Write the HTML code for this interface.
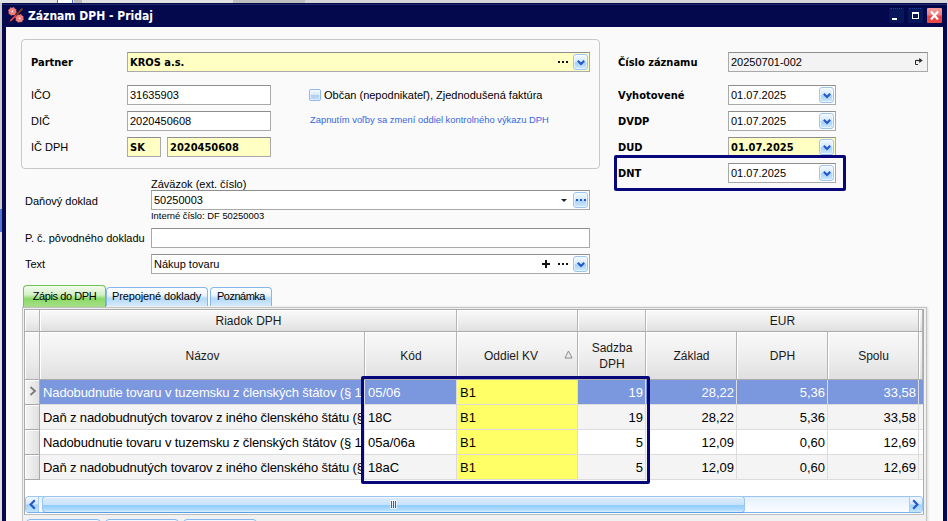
<!DOCTYPE html>
<html lang="sk">
<head>
<meta charset="utf-8">
<title>Záznam DPH - Pridaj</title>
<style>
html,body{margin:0;padding:0;}
body{width:948px;height:521px;overflow:hidden;position:relative;background:#d3d3d6;
  font-family:"Liberation Sans","DejaVu Sans",sans-serif;font-size:11px;color:#000;}
.abs,.abs *{position:absolute;box-sizing:border-box;}
.abs{left:0;top:0;width:948px;height:521px;}
.t{white-space:nowrap;line-height:14px;height:14px;}
.b{font-family:"DejaVu Sans Condensed","DejaVu Sans","Liberation Sans",sans-serif;font-weight:bold;font-stretch:condensed;}
.in{background:#fff;border:1px solid #a9a9a9;border-top-color:#8e8e8e;}
.y{background:#ffffc4;}
.dd{width:15px;height:16px;border:1px solid #9cc6ee;border-radius:3px;background:linear-gradient(#f3f9ff,#d4e9fb 45%,#a6d2f8 55%,#cfe7fc);box-shadow:inset 0 0 0 1px rgba(255,255,255,.55);}
.dd svg{left:3px;top:5px;}
.dot{width:2px;height:2px;background:#111;}
.g{font-size:13px;line-height:16px;height:16px;white-space:nowrap;}
.gh{font-size:12px;line-height:15px;height:15px;white-space:nowrap;text-align:center;color:#1a1a1a;}
.hc{background:linear-gradient(#f9f9f9,#ececec 60%,#dfdfdf);border-right:1px solid #b4b4b4;border-bottom:1px solid #ababab;box-shadow:inset 1px 1px 0 #fff;}
.cell{border-right:1px solid #dcdcdc;border-bottom:1px solid #dcdcdc;}
</style>
</head>
<body>
<div class="abs" id="root">

<!-- background slivers of the window behind -->
<div style="left:0;top:0;width:233px;height:3px;background:#e2e2e2;"></div>
<div style="left:57px;top:0;width:16px;height:3px;background:#fff;border-left:1px solid #4a78c8;border-right:1px solid #4a78c8;"></div>
<div style="left:74px;top:0;width:8px;height:3px;background:#bcbcbc;"></div>
<div style="left:233px;top:0;width:72px;height:3px;background:#bfbfbf;"></div>
<div style="left:305px;top:0;width:643px;height:3px;background:#d6d6d8;"></div>
<div style="left:0;top:3px;width:2px;height:206px;background:#cdcdd0;"></div><div style="left:0;top:209px;width:2px;height:23px;background:#5075d2;"></div><div style="left:0;top:232px;width:2px;height:289px;background:#dedee4;"></div>
<div style="left:947px;top:3px;width:1px;height:518px;background:#d8d8dc;"></div>
<!-- window frame -->
<div id="win" style="left:2px;top:3px;width:945px;height:520px;background:#04094e;"></div>
<div id="client" style="left:6px;top:27px;width:937px;height:496px;background:#fafafa;"></div>

<!-- title -->
<svg id="ticon" style="left:6px;top:5px" width="20" height="20" viewBox="0 0 20 20">
  <circle cx="6.4" cy="6.4" r="3.7" fill="#f08585" stroke="#e86a66" stroke-width="1.3" stroke-dasharray="1.5 1.4"/>
  <circle cx="6.4" cy="6.4" r="1.9" fill="none" stroke="#ec5f5f" stroke-width=".8" stroke-dasharray=".9 1.1"/>
  <circle cx="6.4" cy="6.4" r=".8" fill="#fff"/>
  <circle cx="13.5" cy="13.4" r="3.7" fill="#f08585" stroke="#e86a66" stroke-width="1.3" stroke-dasharray="1.5 1.4"/>
  <circle cx="13.5" cy="13.4" r="1.9" fill="none" stroke="#ec5f5f" stroke-width=".8" stroke-dasharray=".9 1.1"/>
  <circle cx="13.5" cy="13.4" r=".8" fill="#fff"/>
<path d="M4.2 16.2 L10.3 10" stroke="#e8413f" stroke-width="1.7"/>
  <path d="M10.3 10 L16.5 3.7" stroke="#8c3c12" stroke-width="1.7"/>
</svg>
<div class="t b" style="left:28px;top:8px;font-size:12px;color:#fff;line-height:16px;height:16px;">Záznam DPH - Pridaj</div>


<!-- caption buttons -->
<div style="left:2px;top:4px;width:945px;height:1px;background:#23286a;"></div>
<div style="left:889px;top:8px;width:15px;height:15px;background:#08175a;border-top:1px dotted #1d3f9a;border-radius:2px;"></div>
<div style="left:892px;top:18px;width:5px;height:2px;background:#fff;"></div>
<div style="left:908px;top:8px;width:15px;height:15px;background:#08175a;border-top:1px dotted #1d3f9a;border-radius:2px;"></div>
<div style="left:912px;top:12px;width:7px;height:7px;border:1px solid #fff;border-top-width:2px;"></div>
<div style="left:927px;top:8px;width:15px;height:15px;background:linear-gradient(#f09a9a,#ee8080 48%,#e84545 52%,#ea4a4a);border-radius:1px;"></div>
<svg style="left:927px;top:8px" width="15" height="15" viewBox="0 0 15 15"><path d="M4 3.5 L11 11.5 M11 3.5 L4 11.5" stroke="#fff" stroke-width="2.2"/></svg>

<!-- group box -->
<div id="gb" style="left:21px;top:39px;width:579px;height:130px;border:1px solid #c8c8c8;border-radius:4px;background:#fafafa;"></div>

<div class="t b" style="left:31px;top:56px;">Partner</div>
<div class="in y" style="left:127px;top:52px;width:463px;height:20px;"></div>
<div class="t b" style="left:130px;top:56px;">KROS a.s.</div>
<div class="dot" style="left:558px;top:61px;"></div><div class="dot" style="left:562px;top:61px;"></div><div class="dot" style="left:566px;top:61px;"></div>
<div class="dd" style="left:573px;top:54px;"><svg width="8" height="6" viewBox="0 0 8 6"><path d="M0.8 0.8 L4 4 L7.2 0.8" fill="none" stroke="#2358c9" stroke-width="2.1"/></svg></div>

<div class="t" style="left:31px;top:88px;">IČO</div>
<div class="in" style="left:127px;top:85px;width:144px;height:20px;"></div>
<div class="t" style="left:130px;top:88px;">31635903</div>

<div class="t" style="left:31px;top:114px;">DIČ</div>
<div class="in" style="left:127px;top:111px;width:144px;height:20px;"></div>
<div class="t" style="left:130px;top:114px;">2020450608</div>

<div class="t" style="left:31px;top:140px;">IČ DPH</div>
<div class="in y" style="left:127px;top:137px;width:34px;height:20px;"></div>
<div class="t b" style="left:130px;top:141px;">SK</div>
<div class="in y" style="left:167px;top:137px;width:104px;height:20px;"></div>
<div class="t b" style="left:170px;top:141px;">2020450608</div>

<div id="chk" style="left:309px;top:89px;width:12px;height:12px;border:1px solid #8cb8ea;border-radius:2px;background:linear-gradient(#f1f7fd,#d9e8f8 48%,#aecff2 55%,#c4dcf6);box-shadow:inset 0 0 0 1px rgba(255,255,255,.5);"></div>
<div class="t" style="left:324px;top:88px;">Občan (nepodnikateľ), Zjednodušená faktúra</div>
<div class="t" style="left:310px;top:113px;font-size:9.4px;color:#3568dc;">Zapnutím voľby sa zmení oddiel kontrolného výkazu DPH</div>

<!-- right column -->
<div class="t b" style="left:618px;top:56px;">Číslo záznamu</div>
<div class="in" style="left:728px;top:52px;width:200px;height:20px;background:#f3f3f3;"></div>
<div class="t" style="left:731px;top:55px;">20250701-002</div>
<svg style="left:914px;top:57px" width="10" height="9" viewBox="0 0 10 9"><path d="M4 3.5 H1.5 V7.5 H4" fill="none" stroke="#2a2a2a" stroke-width="1"/><path d="M1.5 3.5 H6" stroke="#2a2a2a" stroke-width="1.2"/><path d="M5.2 1 L8.7 3.5 L5.2 6 Z" fill="#2a2a2a"/></svg>

<div class="t b" style="left:618px;top:89px;">Vyhotovené</div>
<div class="in" style="left:728px;top:85px;width:108px;height:20px;"></div>
<div class="t" style="left:731px;top:88px;">01.07.2025</div>
<div class="dd" style="left:819px;top:87px;"><svg width="8" height="6" viewBox="0 0 8 6"><path d="M0.8 0.8 L4 4 L7.2 0.8" fill="none" stroke="#2358c9" stroke-width="2.1"/></svg></div>

<div class="t b" style="left:618px;top:115px;">DVDP</div>
<div class="in" style="left:728px;top:111px;width:108px;height:20px;"></div>
<div class="t" style="left:731px;top:114px;">01.07.2025</div>
<div class="dd" style="left:819px;top:113px;"><svg width="8" height="6" viewBox="0 0 8 6"><path d="M0.8 0.8 L4 4 L7.2 0.8" fill="none" stroke="#2358c9" stroke-width="2.1"/></svg></div>

<div class="t b" style="left:618px;top:141px;">DUD</div>
<div class="in y" style="left:728px;top:137px;width:108px;height:20px;"></div>
<div class="t b" style="left:731px;top:141px;">01.07.2025</div>
<div class="dd" style="left:819px;top:139px;"><svg width="8" height="6" viewBox="0 0 8 6"><path d="M0.8 0.8 L4 4 L7.2 0.8" fill="none" stroke="#2358c9" stroke-width="2.1"/></svg></div>

<div class="t b" style="left:618px;top:167px;">DNT</div>
<div class="in" style="left:728px;top:163px;width:108px;height:20px;"></div>
<div class="t" style="left:731px;top:166px;">01.07.2025</div>
<div class="dd" style="left:819px;top:165px;"><svg width="8" height="6" viewBox="0 0 8 6"><path d="M0.8 0.8 L4 4 L7.2 0.8" fill="none" stroke="#2358c9" stroke-width="2.1"/></svg></div>
<div id="hl1" style="left:614px;top:155px;width:232px;height:36px;border:3px solid #07077c;border-radius:2px;"></div>

<!-- doklad -->
<div class="t" style="left:151px;top:177px;">Záväzok (ext. číslo)</div>
<div class="t" style="left:25px;top:194px;">Daňový doklad</div>
<div class="in" style="left:151px;top:190px;width:439px;height:20px;"></div>
<div class="t" style="left:154px;top:193px;">50250003</div>
<svg style="left:561px;top:199px" width="6" height="3" viewBox="0 0 6 3"><path d="M0 0 H6 L3 3 Z" fill="#222"/></svg>
<div class="dd" style="left:573px;top:192px;"></div>
<div class="dot" style="left:576px;top:199px;background:#1f56c8;"></div><div class="dot" style="left:580px;top:199px;background:#1f56c8;"></div><div class="dot" style="left:584px;top:199px;background:#1f56c8;"></div>
<div class="t" style="left:151px;top:209px;font-size:9.4px;">Interné číslo: DF 50250003</div>

<div class="t" style="left:25px;top:231px;">P. č. pôvodného dokladu</div>
<div class="in" style="left:151px;top:228px;width:439px;height:20px;"></div>

<div class="t" style="left:25px;top:257px;">Text</div>
<div class="in" style="left:151px;top:254px;width:439px;height:20px;"></div>
<div class="t" style="left:154px;top:257px;">Nákup tovaru</div>
<div style="left:542px;top:263px;width:8px;height:2px;background:#111;"></div><div style="left:545px;top:260px;width:2px;height:8px;background:#111;"></div>
<div class="dot" style="left:558px;top:263px;"></div><div class="dot" style="left:562px;top:263px;"></div><div class="dot" style="left:566px;top:263px;"></div>
<div class="dd" style="left:573px;top:256px;"><svg width="8" height="6" viewBox="0 0 8 6"><path d="M0.8 0.8 L4 4 L7.2 0.8" fill="none" stroke="#2358c9" stroke-width="2.1"/></svg></div>


<!-- tabs -->
<div id="tab1" style="left:23px;top:285px;width:83px;height:23px;border:1px solid #72c255;border-bottom:none;border-radius:4px 4px 0 0;background:linear-gradient(#f3fbee,#d2f0c5 40%,#8cd867 58%,#9fdf80 85%,#b2e69a);"></div>
<div class="t" style="left:23px;top:289px;width:83px;text-align:center;letter-spacing:-0.4px;">Zápis do DPH</div>
<div id="tab2" style="left:106px;top:287px;width:102px;height:19px;border:1px solid #86b6ee;border-bottom:none;border-radius:4px 4px 0 0;background:linear-gradient(#ffffff,#eaf4fe 40%,#b4d9f9 60%,#d6ebfc);"></div>
<div class="t" style="left:105px;top:289px;width:103px;text-align:center;letter-spacing:-0.12px;">Prepojené doklady</div>
<div id="tab3" style="left:210px;top:287px;width:62px;height:19px;border:1px solid #86b6ee;border-bottom:none;border-radius:4px 4px 0 0;background:linear-gradient(#ffffff,#eaf4fe 40%,#b4d9f9 60%,#d6ebfc);"></div>
<div class="t" style="left:210px;top:289px;width:62px;text-align:center;letter-spacing:-0.5px;">Poznámka</div>

<!-- tab page / grid -->
<div id="page" style="left:22px;top:307px;width:905px;height:216px;border:1px solid #c2c2c2;background:#f1f1f1;box-shadow:1px 0 2px rgba(0,0,0,.12);"></div>
<div id="grid" style="left:24px;top:309px;width:900px;height:206px;border:1px solid #ababab;border-bottom-color:#bdbdbd;background:#fff;overflow:hidden;"></div>
<div class="hc" style="left:25px;top:310px;width:15px;height:22px;"></div><div class="hc" style="left:25px;top:332px;width:15px;height:48px;"></div><div class="hc" style="left:40px;top:310px;width:417px;height:22px;"></div><div class="hc" style="left:457px;top:310px;width:121px;height:22px;"></div><div class="hc" style="left:578px;top:310px;width:68px;height:22px;"></div><div class="hc" style="left:646px;top:310px;width:273px;height:22px;"></div><div class="hc" style="left:919px;top:310px;width:4px;height:22px;"></div><div class="hc" style="left:40px;top:332px;width:325px;height:48px;"></div><div class="hc" style="left:365px;top:332px;width:92px;height:48px;"></div><div class="hc" style="left:457px;top:332px;width:121px;height:48px;"></div><div class="hc" style="left:578px;top:332px;width:68px;height:48px;"></div><div class="hc" style="left:646px;top:332px;width:91px;height:48px;"></div><div class="hc" style="left:737px;top:332px;width:91px;height:48px;"></div><div class="hc" style="left:828px;top:332px;width:91px;height:48px;"></div><div class="hc" style="left:919px;top:332px;width:4px;height:48px;"></div><div class="gh" style="left:40px;top:314px;width:417px;">Riadok DPH</div><div class="gh" style="left:646px;top:314px;width:273px;">EUR</div><div class="gh" style="left:40px;top:349px;width:325px;">Názov</div><div class="gh" style="left:365px;top:349px;width:92px;">Kód</div><div class="gh" style="left:457px;top:349px;width:108px;">Oddiel KV</div><div class="gh" style="left:646px;top:349px;width:91px;">Základ</div><div class="gh" style="left:737px;top:349px;width:91px;">DPH</div><div class="gh" style="left:828px;top:349px;width:91px;">Spolu</div><div class="gh" style="left:578px;top:341px;width:68px;">Sadzba</div><div class="gh" style="left:578px;top:357px;width:68px;">DPH</div><svg style="left:564px;top:350px" width="9" height="9" viewBox="0 0 9 9"><path d="M4.5 1 L8 8 H1 Z" fill="none" stroke="#8a8a8a" stroke-width="1"/></svg><div style="left:25px;top:380px;width:15px;height:25px;background:linear-gradient(90deg,#f6f6f6,#e0e0e0);border-right:1px solid #a9a9a9;border-bottom:1px solid #a9a9a9;box-shadow:inset 1px 1px 0 #fff;"></div><div class="cell" style="left:40px;top:380px;width:325px;height:25px;background:#7b97de;overflow:hidden;"><div class="g" style="left:3px;top:5px;color:#fff;"><span style="position:static;letter-spacing:-0.12px">Nadobudnutie tovaru v tuzemsku z členských štátov (§ 11, 11a) – znížená sadzba</span></div></div><div class="cell" style="left:365px;top:380px;width:92px;height:25px;background:#7b97de;overflow:hidden;"><div class="g" style="left:3px;top:5px;color:#fff;">05/06</div></div><div class="cell" style="left:457px;top:380px;width:121px;height:25px;background:#ffff66;overflow:hidden;"><div class="g" style="left:3px;top:5px;color:#000;">B1</div></div><div class="cell" style="left:578px;top:380px;width:68px;height:25px;background:#7b97de;overflow:hidden;"><div class="g" style="right:2px;top:5px;color:#fff;">19</div></div><div class="cell" style="left:646px;top:380px;width:91px;height:25px;background:#7b97de;overflow:hidden;"><div class="g" style="right:2px;top:5px;color:#fff;">28,22</div></div><div class="cell" style="left:737px;top:380px;width:91px;height:25px;background:#7b97de;overflow:hidden;"><div class="g" style="right:2px;top:5px;color:#fff;">5,36</div></div><div class="cell" style="left:828px;top:380px;width:91px;height:25px;background:#7b97de;overflow:hidden;"><div class="g" style="right:2px;top:5px;color:#fff;">33,58</div></div><div style="left:919px;top:380px;width:4px;height:25px;background:#7b97de;border-bottom:1px solid #dcdcdc;"></div><div style="left:25px;top:405px;width:15px;height:25px;background:linear-gradient(90deg,#f6f6f6,#e0e0e0);border-right:1px solid #a9a9a9;border-bottom:1px solid #a9a9a9;box-shadow:inset 1px 1px 0 #fff;"></div><div class="cell" style="left:40px;top:405px;width:325px;height:25px;background:#f4f4f4;overflow:hidden;"><div class="g" style="left:3px;top:5px;color:#000;"><span style="position:static;letter-spacing:-0.12px">Daň z nadobudnutých tovarov z iného členského štátu (§ 11, 11a) – znížená sadzba</span></div></div><div class="cell" style="left:365px;top:405px;width:92px;height:25px;background:#f4f4f4;overflow:hidden;"><div class="g" style="left:3px;top:5px;color:#000;">18C</div></div><div class="cell" style="left:457px;top:405px;width:121px;height:25px;background:#ffff66;overflow:hidden;"><div class="g" style="left:3px;top:5px;color:#000;">B1</div></div><div class="cell" style="left:578px;top:405px;width:68px;height:25px;background:#f4f4f4;overflow:hidden;"><div class="g" style="right:2px;top:5px;color:#000;">19</div></div><div class="cell" style="left:646px;top:405px;width:91px;height:25px;background:#f4f4f4;overflow:hidden;"><div class="g" style="right:2px;top:5px;color:#000;">28,22</div></div><div class="cell" style="left:737px;top:405px;width:91px;height:25px;background:#f4f4f4;overflow:hidden;"><div class="g" style="right:2px;top:5px;color:#000;">5,36</div></div><div class="cell" style="left:828px;top:405px;width:91px;height:25px;background:#f4f4f4;overflow:hidden;"><div class="g" style="right:2px;top:5px;color:#000;">33,58</div></div><div style="left:919px;top:405px;width:4px;height:25px;background:#f4f4f4;border-bottom:1px solid #dcdcdc;"></div><div style="left:25px;top:430px;width:15px;height:25px;background:linear-gradient(90deg,#f6f6f6,#e0e0e0);border-right:1px solid #a9a9a9;border-bottom:1px solid #a9a9a9;box-shadow:inset 1px 1px 0 #fff;"></div><div class="cell" style="left:40px;top:430px;width:325px;height:25px;background:#ffffff;overflow:hidden;"><div class="g" style="left:3px;top:5px;color:#000;"><span style="position:static;letter-spacing:-0.12px">Nadobudnutie tovaru v tuzemsku z členských štátov (§ 11, 11a) – znížená sadzba</span></div></div><div class="cell" style="left:365px;top:430px;width:92px;height:25px;background:#ffffff;overflow:hidden;"><div class="g" style="left:3px;top:5px;color:#000;">05a/06a</div></div><div class="cell" style="left:457px;top:430px;width:121px;height:25px;background:#ffff66;overflow:hidden;"><div class="g" style="left:3px;top:5px;color:#000;">B1</div></div><div class="cell" style="left:578px;top:430px;width:68px;height:25px;background:#ffffff;overflow:hidden;"><div class="g" style="right:2px;top:5px;color:#000;">5</div></div><div class="cell" style="left:646px;top:430px;width:91px;height:25px;background:#ffffff;overflow:hidden;"><div class="g" style="right:2px;top:5px;color:#000;">12,09</div></div><div class="cell" style="left:737px;top:430px;width:91px;height:25px;background:#ffffff;overflow:hidden;"><div class="g" style="right:2px;top:5px;color:#000;">0,60</div></div><div class="cell" style="left:828px;top:430px;width:91px;height:25px;background:#ffffff;overflow:hidden;"><div class="g" style="right:2px;top:5px;color:#000;">12,69</div></div><div style="left:919px;top:430px;width:4px;height:25px;background:#ffffff;border-bottom:1px solid #dcdcdc;"></div><div style="left:25px;top:455px;width:15px;height:25px;background:linear-gradient(90deg,#f6f6f6,#e0e0e0);border-right:1px solid #a9a9a9;border-bottom:1px solid #a9a9a9;box-shadow:inset 1px 1px 0 #fff;"></div><div class="cell" style="left:40px;top:455px;width:325px;height:25px;background:#f4f4f4;overflow:hidden;"><div class="g" style="left:3px;top:5px;color:#000;"><span style="position:static;letter-spacing:-0.12px">Daň z nadobudnutých tovarov z iného členského štátu (§ 11, 11a) – znížená sadzba</span></div></div><div class="cell" style="left:365px;top:455px;width:92px;height:25px;background:#f4f4f4;overflow:hidden;"><div class="g" style="left:3px;top:5px;color:#000;">18aC</div></div><div class="cell" style="left:457px;top:455px;width:121px;height:25px;background:#ffff66;overflow:hidden;"><div class="g" style="left:3px;top:5px;color:#000;">B1</div></div><div class="cell" style="left:578px;top:455px;width:68px;height:25px;background:#f4f4f4;overflow:hidden;"><div class="g" style="right:2px;top:5px;color:#000;">5</div></div><div class="cell" style="left:646px;top:455px;width:91px;height:25px;background:#f4f4f4;overflow:hidden;"><div class="g" style="right:2px;top:5px;color:#000;">12,09</div></div><div class="cell" style="left:737px;top:455px;width:91px;height:25px;background:#f4f4f4;overflow:hidden;"><div class="g" style="right:2px;top:5px;color:#000;">0,60</div></div><div class="cell" style="left:828px;top:455px;width:91px;height:25px;background:#f4f4f4;overflow:hidden;"><div class="g" style="right:2px;top:5px;color:#000;">12,69</div></div><div style="left:919px;top:455px;width:4px;height:25px;background:#f4f4f4;border-bottom:1px solid #dcdcdc;"></div><svg style="left:29px;top:386px" width="8" height="10" viewBox="0 0 8 10"><path d="M1.5 1 L6 5 L1.5 9" fill="none" stroke="#777" stroke-width="1.7"/></svg><div id="hl2" style="left:361px;top:376px;width:289px;height:108px;border:3px solid #07077c;border-radius:2px;"></div>
<div id="sbtrack" style="left:25px;top:496px;width:898px;height:17px;background:linear-gradient(#e4f0fd,#f0f7fe 50%,#fbfdff);border:1px solid #9cc5f1;border-bottom-color:#79b1ee;border-radius:4px;"></div>
<div id="sbl" style="left:26px;top:497px;width:13px;height:15px;border-radius:3px 0 0 3px;background:linear-gradient(#f1f8ff,#d3e8fc 48%,#9fd2fa 52%,#c3e4fc);border-right:1px solid #a9cdf2;"></div>
<svg style="left:29px;top:499px" width="7" height="11" viewBox="0 0 7 11"><path d="M5.8 1.2 L1.6 5.5 L5.8 9.8" fill="none" stroke="#2358c9" stroke-width="2.2"/></svg>
<div id="sbthumb" style="left:42px;top:496px;width:703px;height:17px;border:1px solid #9cc5f1;border-bottom-color:#5a9ee6;border-radius:4px;background:linear-gradient(#f6faff 0,#d8eafc 12%,#c9e3fb 50%,#8fcbfa 53%,#b2dcfc 88%,#e2f1fe 100%);"></div>
<div style="left:390px;top:500px;width:7px;height:9px;background:rgba(255,255,255,.6);"></div>
<div style="left:391px;top:501px;width:1px;height:7px;background:#2a62d0;"></div>
<div style="left:393px;top:501px;width:1px;height:7px;background:#2a62d0;"></div>
<div style="left:395px;top:501px;width:1px;height:7px;background:#2a62d0;"></div>
<div id="sbr" style="left:909px;top:497px;width:13px;height:15px;border-radius:0 3px 3px 0;background:linear-gradient(#f1f8ff,#d3e8fc 48%,#9fd2fa 52%,#c3e4fc);border-left:1px solid #a9cdf2;"></div>
<svg style="left:912px;top:499px" width="7" height="11" viewBox="0 0 7 11"><path d="M1.2 1.2 L5.4 5.5 L1.2 9.8" fill="none" stroke="#2358c9" stroke-width="2.2"/></svg>
<div style="left:26px;top:519px;width:75px;height:10px;border:1px solid #86b6ee;border-radius:4px 4px 0 0;background:#f4f9ff;"></div><div style="left:105px;top:519px;width:74px;height:10px;border:1px solid #86b6ee;border-radius:4px 4px 0 0;background:#f4f9ff;"></div><div style="left:183px;top:519px;width:74px;height:10px;border:1px solid #86b6ee;border-radius:4px 4px 0 0;background:#f4f9ff;"></div>
</div>
</body>
</html>
